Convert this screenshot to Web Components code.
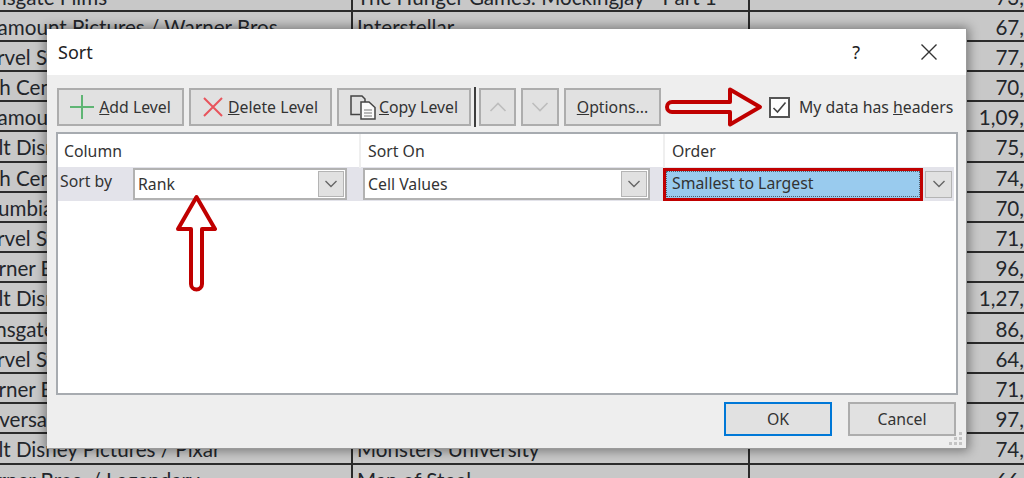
<!DOCTYPE html>
<html>
<head>
<meta charset="utf-8">
<title>Sort</title>
<style>
    html, body { margin: 0; height: 100%; overflow: hidden; background: #c8c8c8; }
</style>
</head>
<body>
<x-sheet></x-sheet>
<x-sort-dialog></x-sort-dialog>

<template id="template-sheet">
    <style>
        :host {
            display: block;
            width: 1024px;
            height: 478px;
            overflow: hidden;
            font: 20.6px Lato, "Liberation Sans", sans-serif;
            color: #23262b;
            background: #c8c8c8;
        }
        .rows {
            display: grid;
            grid-template-columns: 389px 397px 274px;
            grid-auto-rows: 30.2px;
            margin: -18.5px 0 0 -36px;
            width: 1060px;
        }
        .cell {
            white-space: nowrap;
            overflow: hidden;
            padding: 1px 0 0 4px;
            line-height: 28px;
            border-bottom: 2px solid #2b2b2b;
            border-right: 2px solid #2b2b2b;
            box-sizing: border-box;
        }
        .num { text-align: right; border-right: 0; padding: 1px 0 0 0; }
    </style>
    <div class="rows"></div>
</template>

<template id="template-btn">
    <style>
        :host {
            display: flex;
            box-sizing: border-box;
            height: 38px;
            align-items: center;
            justify-content: center;
            gap: 5px;
            flex: none;
            background: #e1e1e1;
            border: 2px solid #adadad;
            color: #333;
        }
        :host([default]) { border-color: #0078d7; }
        ::slotted(svg) { display: block; flex: none; }
    </style>
    <slot></slot>
</template>

<template id="template-combo">
    <style>
        :host {
            display: flex;
            box-sizing: border-box;
            height: 32px;
            align-items: center;
            background: #fff;
            border: 2px solid #b2b2b2;
            color: #333;
            padding-left: 3px;
        }
        .text { flex: 1; white-space: nowrap; }
        .drop {
            width: 26px;
            height: 26px;
            box-sizing: border-box;
            margin-right: 1px;
            background: #e1e1e1;
            border: 1px solid #b4b4b4;
            display: flex;
            align-items: center;
            justify-content: center;
        }
    </style>
    <div class="text"><slot></slot></div>
    <div class="drop">
        <svg width="14" height="8" viewBox="0 0 14 8"><path d="M1.5 1 L7 6.5 L12.5 1" fill="none" stroke="#666" stroke-width="1.4"/></svg>
    </div>
</template>

<template id="template-order">
    <style>
        :host {
            display: flex;
            align-items: center;
            height: 34px;
            color: #333;
        }
        .field {
            box-sizing: border-box;
            width: 260px;
            height: 33px;
            border: 3px solid #c00000;
            background: #99cbee;
            display: flex;
            align-items: center;
        }
        .focus {
            flex: 1;
            margin: 1px;
            height: 24px;
            line-height: 23px;
            padding-left: 5px;
            outline: 1px dotted #4d5f6e;
            white-space: nowrap;
        }
        .drop {
            width: 27px;
            height: 27px;
            box-sizing: border-box;
            margin-left: 2px;
            background: #e1e1e1;
            border: 1px solid #b4b4b4;
            display: flex;
            align-items: center;
            justify-content: center;
        }
    </style>
    <div class="field"><div class="focus"><slot></slot></div></div>
    <div class="drop">
        <svg width="14" height="8" viewBox="0 0 14 8"><path d="M1.5 1 L7 6.5 L12.5 1" fill="none" stroke="#666" stroke-width="1.4"/></svg>
    </div>
</template>

<template id="template-dialog">
    <style>
        :host {
            display: flex;
            flex-direction: column;
            position: absolute;
            left: 47px;
            top: 29px;
            width: 920px;
            height: 420px;
            box-sizing: border-box;
            background: #eeeeee;
            border: 1px solid #9a9a9a;
            border-width: 0 1px 1px 0;
            box-shadow: 0 0 10px 2px rgba(0, 0, 0, .4);
            font: 15.8px "Noto Sans", "Open Sans", sans-serif;
            color: #333;
        }
        .title {
            flex: none;
            height: 46px;
            background: #fff;
            display: flex;
            align-items: center;
            padding-left: 11px;
            font-size: 18px;
            color: #222;
        }
        .title .name { flex: 1; }
        .title .help { font-size: 18px; margin-right: 60px; }
        .title svg { margin-right: 28px; display: block; }
        .toolbar {
            flex: none;
            display: flex;
            align-items: center;
            margin: 13px 0 0 10px;
            height: 38px;
            white-space: nowrap;
        }
        .toolbar x-btn { margin-right: 5px; }
        .sep {
            flex: none;
            width: 2px;
            height: 40px;
            background: #3c3c3c;
            margin: 0 3px 0 -2px;
        }
        .right-arrow { flex: none; margin-left: -1px; display: block; }
        .check {
            flex: none;
            box-sizing: border-box;
            width: 21px;
            height: 21px;
            margin: 0 9px 0 6px;
            background: #fff;
            border: 2px solid #555;
            display: flex;
            align-items: center;
            justify-content: center;
        }
        .list {
            flex: none;
            position: relative;
            box-sizing: border-box;
            margin: 6px 0 0 9px;
            width: 902px;
            height: 263px;
            background: #fff;
            border: 2px solid #a7abb0;
        }
        .head {
            display: grid;
            grid-template-columns: 303px 304px 288px;
            height: 33px;
        }
        .head div {
            padding-left: 6px;
            line-height: 34px;
            border-right: 2px solid #efefef;
        }
        .head div + div { padding-left: 7px; }
        .band {
            display: flex;
            align-items: center;
            box-sizing: border-box;
            width: 896px;
            height: 34px;
            background: #e3e3ea;
            padding-left: 2px;
        }
        .band .by { width: 73px; flex: none; margin-top: -7px; }
        .up-arrow { position: absolute; left: 116px; top: 59px; display: block; }
        .foot {
            flex: none;
            display: flex;
            justify-content: flex-end;
            margin: 7px 10px 0 0;
            gap: 16px;
        }
        .foot x-btn { height: 34px; width: 108px; }
        .grip { position: absolute; right: 3px; bottom: 2px; display: block; }
    </style>
    <div class="title">
        <span class="name">Sort</span>
        <span class="help">?</span>
        <svg width="18" height="18" viewBox="0 0 18 18"><path d="M1.5 1.5 L16.5 16.5 M16.5 1.5 L1.5 16.5" stroke="#333" stroke-width="1.4" fill="none"/></svg>
    </div>
    <div class="toolbar">
        <x-btn style="width:127px;margin-right:5px">
            <svg width="24" height="24" viewBox="0 0 24 24"><path d="M12 0 V24 M0 12 H24" stroke="#5fb574" stroke-width="2" fill="none"/></svg>
            <span><u>A</u>dd Level</span>
        </x-btn>
        <x-btn style="width:143px">
            <svg width="20" height="20" viewBox="0 0 20 20"><path d="M1 1 L19 19 M19 1 L1 19" stroke="#e8545c" stroke-width="2" fill="none"/></svg>
            <span><u>D</u>elete Level</span>
        </x-btn>
        <x-btn style="width:134px;gap:3px">
            <svg width="26" height="25" viewBox="0 0 26 25">
                <path d="M10 19.5 H1 V1 H12 L15 4 V7" fill="none" stroke="#444" stroke-width="1.5"/>
                <path d="M11 7 H19 L25 12.5 V24 H11 Z" fill="#fafafa" stroke="#444" stroke-width="1.5"/>
                <path d="M14 15 H22 M14 18 H22 M14 21 H22" stroke="#777" stroke-width="1.2"/>
            </svg>
            <span><u>C</u>opy Level</span>
        </x-btn>
        <div class="sep"></div>
        <x-btn style="width:37px">
            <svg width="18" height="10" viewBox="0 0 18 10"><path d="M1.5 9 L9 1.5 L16.5 9" fill="none" stroke="#bdbdbd" stroke-width="1.6"/></svg>
        </x-btn>
        <x-btn style="width:38px">
            <svg width="18" height="10" viewBox="0 0 18 10"><path d="M1.5 1 L9 8.5 L16.5 1" fill="none" stroke="#bdbdbd" stroke-width="1.6"/></svg>
        </x-btn>
        <x-btn style="width:97px"><span><u>O</u>ptions...</span></x-btn>
        <svg class="right-arrow" width="98" height="42" viewBox="0 0 98 42"><path d="M7 16 H65 V3.500 L95 21 L65 38.500 V26 H7 a5 5 0 0 1 0 -10 Z" fill="#f0f0f0" stroke="#c00000" stroke-width="4" stroke-linejoin="round"/></svg>
        <div class="check">
            <svg width="15" height="13" viewBox="0 0 15 13"><path d="M1.5 7 L5.5 11 L13.5 1.5" fill="none" stroke="#444" stroke-width="1.6"/></svg>
        </div>
        <span>My data has <u>h</u>eaders</span>
    </div>
    <div class="list">
        <div class="head">
            <div>Column</div>
            <div>Sort On</div>
            <div style="border-right:0">Order</div>
        </div>
        <div class="band">
            <span class="by">Sort by</span>
            <x-combo style="width:214px">Rank</x-combo>
            <x-combo style="width:287px;margin-left:16px">Cell Values</x-combo>
            <x-order style="margin-left:13px">Smallest to Largest</x-order>
        </div>
        <svg class="up-arrow" width="45" height="101" viewBox="0 0 45 101"><path d="M22.5 4 L41 36 H28 V91 a5.500 5.500 0 0 1 -11 0 V36 H4 Z" fill="#fff" stroke="#c00000" stroke-width="4" stroke-linejoin="round"/></svg>
    </div>
    <div class="foot">
        <x-btn default>OK</x-btn>
        <x-btn>Cancel</x-btn>
    </div>
    <svg class="grip" width="14" height="14" viewBox="0 0 14 14" fill="#c4c4c4">
        <rect x="10" y="0" width="3" height="3"/>
        <rect x="5" y="5" width="3" height="3"/><rect x="10" y="5" width="3" height="3"/>
        <rect x="0" y="10" width="3" height="3"/><rect x="5" y="10" width="3" height="3"/><rect x="10" y="10" width="3" height="3"/>
    </svg>
</template>

<script>
    const SHEET_ROWS = [
        ['Lionsgate Films', 'The Hunger Games: Mockingjay - Part 1', '73,'],
        ['Paramount Pictures / Warner Bros.', 'Interstellar', '67,'],
        ['Marvel Studios', '', '77,'],
        ['20th Century Fox', '', '70,'],
        ['Paramount Pictures', '', '1,09,'],
        ['Walt Disney Pictures', '', '75,'],
        ['20th Century Fox', '', '74,'],
        ['Columbia Pictures', '', '70,'],
        ['Marvel Studios', '', '71,'],
        ['Warner Bros.', '', '96,'],
        ['Walt Disney Pictures', '', '1,27,'],
        ['Lionsgate Films', '', '86,'],
        ['Marvel Studios', '', '64,'],
        ['Warner Bros.', '', '71,'],
        ['Universal Pictures', '', '97,'],
        ['Walt Disney Pictures / Pixar', 'Monsters University', '74,'],
        ['Warner Bros. / Legendary', 'Man of Steel', '66,'],
    ];

    // every element just clones its own template
    const simple = (name, templateId) => customElements.define(name, class extends HTMLElement {
        constructor() {
            super();
            this.shadow = this.attachShadow({ mode: 'open' });
            this.shadow.appendChild(document.getElementById(templateId).content.cloneNode(true));
        }
    });
    simple('x-btn', 'template-btn');
    simple('x-combo', 'template-combo');
    simple('x-order', 'template-order');
    simple('x-sort-dialog', 'template-dialog');

    customElements.define('x-sheet', class extends HTMLElement {
        constructor() {
            super();
            this.shadow = this.attachShadow({ mode: 'open' });
            this.shadow.appendChild(document.getElementById('template-sheet').content.cloneNode(true));
            const rows = this.shadow.querySelector('.rows');
            SHEET_ROWS.forEach(row => {
                row.forEach((text, i) => {
                    const el = document.createElement('div');
                    el.className = i === 2 ? 'cell num' : 'cell';
                    el.textContent = text;
                    rows.appendChild(el);
                });
            });
        }
    });
</script>
</body>
</html>
